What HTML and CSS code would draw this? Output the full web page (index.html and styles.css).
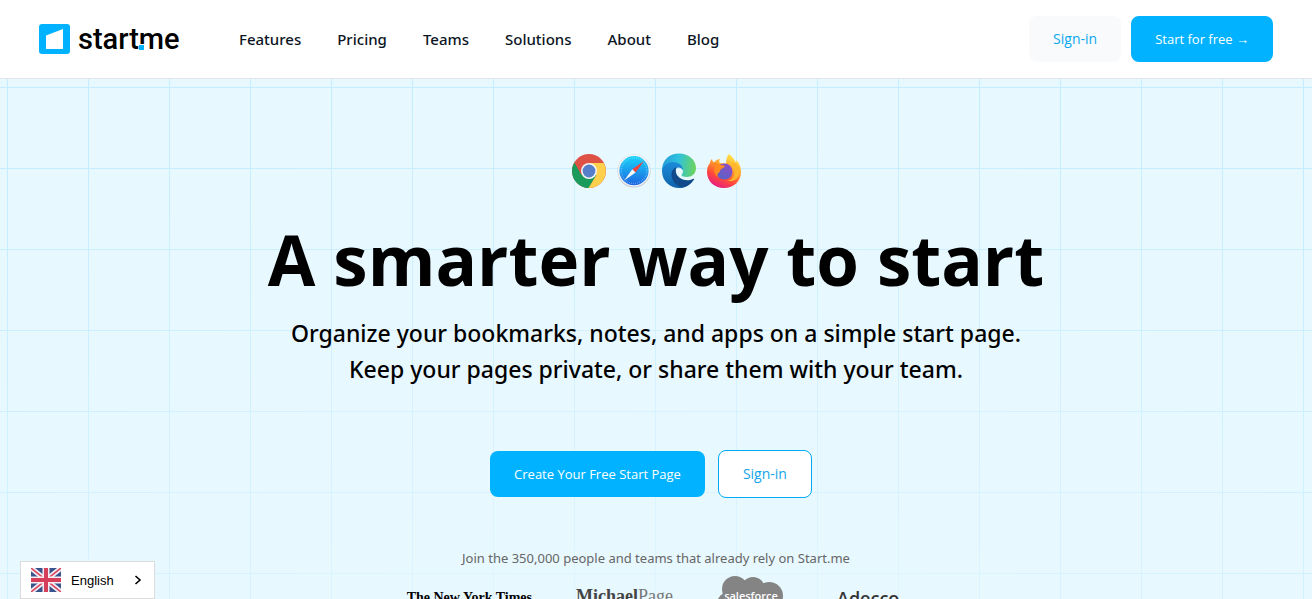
FILE: index.html
```html
<!DOCTYPE html>
<html lang="en">
<head>
<meta charset="utf-8">
<title>start.me</title>
<link rel="stylesheet" href="styles.css">
</head>
<body>
<header class="header">
  <a class="logo" href="#" aria-label="start.me">
    <svg class="logo-mark" viewBox="0 0 31 30" aria-hidden="true"><rect width="31" height="30" rx="3" fill="#00b2ff"/><path d="M7 11.500 24 5v20H7z" fill="#fff"/></svg>
    <span class="logo-text">start<span class="logo-me">me</span></span>
  </a>
  <nav class="nav">
    <a href="#">Features</a><a href="#">Pricing</a><a href="#">Teams</a><a href="#">Solutions</a><a href="#">About</a><a href="#">Blog</a>
  </nav>
  <div class="actions">
    <a class="btn btn-soft" href="#">Sign-in</a>
    <a class="btn btn-primary" href="#">Start for free →</a>
  </div>
</header>
<main class="hero">
  <div class="browsers">
    <svg viewBox="0 0 36 36" role="img" aria-label="Chrome">
      <circle cx="18" cy="18" r="17" fill="#de5145"/>
      <path d="M3.300 9.500A17 17 0 0 0 18 35l7.500-13H10.500z" fill="#1a9a5b"/>
      <path d="M32.800 10H18l7.400 12L17.500 35A17 17 0 0 0 32.800 10z" fill="#ffd04b"/>
      <circle cx="18" cy="18" r="8" fill="#f4f4f4"/><circle cx="18" cy="18" r="6.400" fill="#557fcb"/>
    </svg>
    <svg viewBox="0 0 36 36" role="img" aria-label="Safari">
      <defs><linearGradient id="saf" x2="0" y2="1"><stop stop-color="#19d4fb"/><stop offset="1" stop-color="#1d65e0"/></linearGradient></defs>
      <circle cx="18" cy="18" r="16.500" fill="#c3c9d2"/><circle cx="18" cy="17.500" r="16" fill="#f5f5f7"/>
      <circle cx="18" cy="17.700" r="14.600" fill="url(#saf)"/>
      <circle cx="18" cy="17.700" r="12.800" fill="none" stroke="#c4ecff" stroke-width="1.400" stroke-dasharray=".5 1.510" opacity=".7"/>
      <path d="M28 8 16.300 16.200l3.300 3.200z" fill="#f0443e"/><path d="M8.200 27.500l8.100-11.300 3.300 3.200z" fill="#f4f6fa"/>
    </svg>
    <svg viewBox="0 0 36 36" role="img" aria-label="Edge">
      <defs>
        <linearGradient id="ed1" x1="0" y1=".4" x2="1" y2=".5"><stop stop-color="#259bd8"/><stop offset=".45" stop-color="#2fc2df"/><stop offset="1" stop-color="#6bd45c"/></linearGradient>
        <linearGradient id="ed2" x2="0" y2="1"><stop stop-color="#1b8cda"/><stop offset="1" stop-color="#1162ac"/></linearGradient>
      </defs>
      <path d="M1 16C2 6 9 .5 18 .5c10 0 17 7 17 14.500 0 6-4.500 9-9 9-3.500 0-5.500-1-5.500-2 0-.7 1.500-1.200 1.500-4 0-3-3-5.500-7-5.500C9 12.500 4 15 1 20z" fill="url(#ed1)"/>
      <path d="M1 18C2 12 7 9 12 9c6 0 10 4 10 8.500-1.500-3-5-4-7-2-3 3-1 10 3 13 4 3 9 3 13.500-.3C28 33 23 35 18 35 9 35 1 28 1 18z" fill="url(#ed2)"/>
      <path d="M15.500 14.200C11 16 9.500 20 11 25c1.500 5 5.500 8.500 10 9.500 5-.8 9-3.500 12-7.700.6-.9-.2-1.300-1-.9-4.500 2.300-10.500 1.500-14-1.700-3.300-3-4-6.500-2.500-10z" fill="#114a8b"/>
    </svg>
    <svg viewBox="0 0 36 36" role="img" aria-label="Firefox">
      <defs>
        <linearGradient id="ff1" x1=".8" y1="0" x2=".3" y2="1"><stop stop-color="#fff04a"/><stop offset=".4" stop-color="#ffa22e"/><stop offset=".7" stop-color="#ff4b3a"/><stop offset="1" stop-color="#e51a83"/></linearGradient>
        <linearGradient id="ff2" x1=".8" x2=".2" y2="1"><stop stop-color="#8f4bc4"/><stop offset="1" stop-color="#5664c8"/></linearGradient>
      </defs>
      <path d="M23 1c3 2 5 5 6.500 8 1-.3 1-1 1-2C34 11 35 15 35 19c0 9-7 16-17 16S1 28 1 19c0-4 1.200-7 3-9 0-1 .5-3 2-4 .3 2 1 3 2 3.500C10 7 12.500 6 14 6c-1 2-1 3 0 4l6 .5C20 7 21 3 23 1z" fill="url(#ff1)"/>
      <circle cx="18.500" cy="18.500" r="8" fill="url(#ff2)"/>
      <path d="M5 10c5-1 7 1 9 2 2 .5 4 0 5 1-1 2-3.500 2.500-4.500 3.500-.5 1 0 2-1.500 3-2 1-2 3-1 5-4-3-5-9-2-11z" fill="#ff8a20"/>
      <path d="M20 10c6 0 9 4 8.500 10-.3 4-3 7-7 8 8 1 12-4 12-9 0-4-2-7-5-9z" fill="#ffb62c"/>
    </svg>
  </div>
  <h1 class="title">A smarter way to start</h1>
  <p class="subtitle">Organize your bookmarks, notes, and apps on a simple start page.<br>Keep your pages private, or share them with your team.</p>
  <div class="cta">
    <a class="btn btn-primary" href="#">Create Your Free Start Page</a>
    <a class="btn btn-outline" href="#">Sign-in</a>
  </div>
  <p class="trust">Join the 350,000 people and teams that already rely on Start.me</p>
  <div class="brands">
    <span class="brand-nyt">The New York Times</span>
    <span class="brand-mp"><b>Michael</b>Page</span>
    <svg class="brand-sf" viewBox="0 0 68 46" role="img" aria-label="salesforce">
      <g fill="#848484"><circle cx="18" cy="13" r="13"/><circle cx="36" cy="13" r="12"/><circle cx="52" cy="20" r="14"/><circle cx="12" cy="28" r="12"/><circle cx="28" cy="32" r="13"/><circle cx="44" cy="29" r="12"/></g>
      <text x="34" y="24" text-anchor="middle" class="brand-sf-text">salesforce</text>
    </svg>
    <span class="brand-ad">Adecco</span>
  </div>
</main>
<button class="language" type="button">
  <svg class="flag" viewBox="0 0 30 24" aria-hidden="true">
    <rect width="30" height="24" fill="#39538d"/>
    <path d="M0 0 30 24M30 0 0 24" stroke="#f2eef2" stroke-width="5"/>
    <path d="M0 0 30 24M30 0 0 24" stroke="#d94560" stroke-width="1.600"/>
    <path d="M15 0v24M0 12h30" stroke="#f6eef2" stroke-width="7"/>
    <path d="M15 0v24M0 12h30" stroke="#d63f59" stroke-width="4"/>
  </svg>
  <span class="language-name">English</span>
  <svg class="chevron" viewBox="0 0 8 10" aria-hidden="true"><path d="M1.500 1 6 5 1.500 9" fill="none" stroke="#000" stroke-width="1.600"/></svg>
</button>
</body>
</html>
```
FILE: styles.css
```css
* { box-sizing: border-box; }
body {
  margin: 0;
  height: 100vh;
  overflow: hidden;
  display: flex;
  flex-direction: column;
  font-family: "Open Sans", "Noto Sans", sans-serif;
  color: #000;
  background: #e8f8ff;
}
a { color: inherit; text-decoration: none; }
.header {
  flex: none;
  display: flex;
  align-items: center;
  padding: 16px 39px;
  background: #fff;
  border-bottom: 1px solid #e2e4e7;
}
.logo { display: flex; align-items: center; gap: 8px; width: 200px; }
.logo-mark { width: 31px; height: 30px; }
.logo-text { font: 500 29px/30px Roboto, sans-serif; }
.logo-me { position: relative; }
.logo-me::before {
  content: "";
  position: absolute;
  left: 0;
  bottom: 6px;
  width: 5px;
  height: 5px;
  background: #00b2ff;
  border-top: 1px solid #fff;
  border-right: 1px solid #fff;
}
.nav { display: flex; gap: 36px; font-family: "Noto Sans", sans-serif; font-size: 15px; font-weight: 500; color: #0c1524; }
.actions { display: flex; gap: 10px; margin-left: auto; }
.btn {
  padding: 12px 24px;
  border-radius: 8px;
  font-size: 14px;
  line-height: 22px;
}
.btn-soft { background: #f8fafc; color: #0ba8f0; }
.btn-primary { background: #00b2ff; color: #fff; font-size: 13px; }
.btn-outline { background: #fff; color: #14a5e8; border: 1px solid #00aaf5; }
.hero {
  flex: 1 0 auto;
  display: flex;
  flex-direction: column;
  align-items: center;
  padding: 74px 24px 80px;
  text-align: center;
  background:
    radial-gradient(ellipse 90% 100% at 50% 100%, rgba(232, 248, 255, .9), rgba(232, 248, 255, 0)),
    linear-gradient(#c4edff 1px, transparent 1px) 0 8px / 81px 81px,
    linear-gradient(90deg, #c4edff 1px, transparent 1px) 7px 0 / 81px 81px,
    #e8f8ff;
}
.browsers { display: flex; gap: 9px; }
.browsers svg { width: 36px; height: 36px; }
.title { margin: 22px 0 0; font-size: 69px; line-height: 96px; font-weight: 700; }
.subtitle { margin: 8px 0 0; font-family: "Noto Sans", sans-serif; font-size: 23px; line-height: 36px; font-weight: 500; }
.cta { display: flex; align-items: center; gap: 13px; margin: 63px 10px 0 0; }
.trust { margin: 49px 0 0; font-family: "Noto Sans", sans-serif; font-size: 13px; line-height: 22px; color: #666; }
.brands { display: flex; align-items: flex-start; gap: 44px; margin: 7px 6px 0 0; }
.brand-nyt { font: 700 14px/20px "Liberation Serif", serif; margin-top: 12px; }
.brand-mp { font: 18px/20px "Liberation Serif", serif; color: #777; margin-top: 10px; }
.brand-mp b { color: #444; }
.brand-sf { width: 68px; height: 46px; }
.brand-sf-text { font: 600 11px "Open Sans", sans-serif; fill: #fff; }
.brand-ad { font-size: 18px; line-height: 20px; font-weight: 600; color: #333; margin: 12px 0 0 8px; }
.language {
  position: fixed;
  left: 20px;
  bottom: 0;
  display: flex;
  align-items: center;
  width: 135px;
  height: 38px;
  padding: 0 12px 0 10px;
  border: 1px solid #dcdcdc;
  background: #fff;
  color: #000;
  font: 13px "Liberation Sans", Arial, sans-serif;
}
.flag { width: 30px; height: 24px; margin-right: 10px; }
.chevron { width: 8px; height: 10px; margin-left: auto; }
```
